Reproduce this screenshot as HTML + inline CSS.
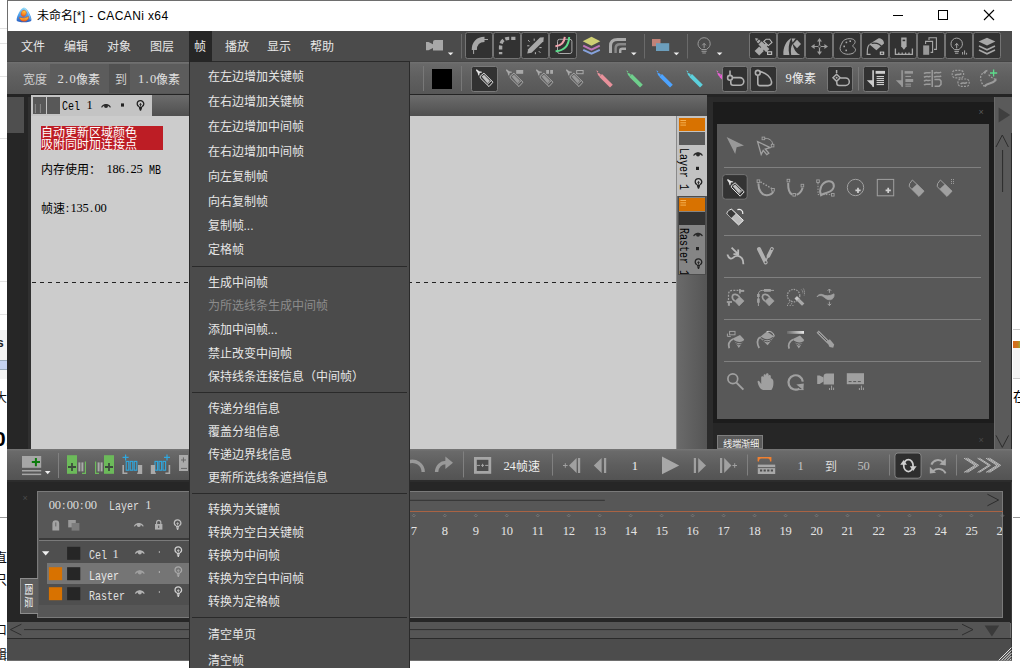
<!DOCTYPE html>
<html lang="zh-CN">
<head>
<meta charset="utf-8">
<title>CACANi</title>
<style>
*{box-sizing:border-box;margin:0;padding:0}
html,body{width:1020px;height:668px;overflow:hidden;background:#fff}
body{position:relative;font-family:"Liberation Sans",sans-serif;font-size:12px;color:#ddd}
.a{position:absolute}
.t{position:absolute;white-space:nowrap;line-height:14px;font-size:12px}
.d{display:inline-block;position:relative;top:-1px;width:6px;text-align:center;font-family:"Liberation Serif",serif;font-size:12.5px}
.w{display:inline-block;white-space:pre}
.m2{display:inline-block;font-family:"Liberation Mono",monospace;font-size:12.5px;transform:scaleX(.8);transform-origin:0 50%}
.m{font-family:"Liberation Mono",monospace;transform:scaleX(.8);transform-origin:0 50%}
svg{position:absolute;overflow:visible}
.btn{position:absolute;width:27.6px;height:27px;background:#323232;border:1px solid #747474;border-radius:2.5px}
.vsep{position:absolute;width:1px;background:#787878}
.mi{position:absolute;top:39px;font-size:12px;color:#e6e6e6;line-height:16px;white-space:nowrap}
.pi{position:absolute;left:207.5px;font-size:12px;color:#e6e6e6;line-height:14px;white-space:nowrap}
.dis{color:#8c8c8c}
.psep{position:absolute;left:192px;width:215px;height:1px;background:#2a2a2a}
</style>
</head>
<body>
<div class="a" style="left:0px;top:28px;width:7px;height:1px;background:#e2e2e2"></div>
<div class="a" style="left:0px;top:43px;width:7px;height:1px;background:#e2e2e2"></div>
<div class="a" style="left:0px;top:76px;width:7px;height:1px;background:#e2e2e2"></div>
<div class="a" style="left:0px;top:138px;width:7px;height:1px;background:#e2e2e2"></div>
<div class="a" style="left:0px;top:281px;width:7px;height:1px;background:#e2e2e2"></div>
<div class="a" style="left:0px;top:314px;width:7px;height:1px;background:#e2e2e2"></div>
<div class="a" style="left:0px;top:330px;width:8px;height:49px;background:#f3f3f3"></div>
<div class="a" style="left:0px;top:360px;width:7px;height:10px;background:#c4d2f0;border-top:1px solid #9ab;border-bottom:1px solid #9ab"></div>
<div class="t" style="left:-3px;top:336px;color:#222;font-size:12px;font-weight:bold">s</div>
<div class="t" style="left:-5px;top:391px;color:#111;font-size:12px">大</div>
<div class="t" style="left:-6px;top:428px;color:#000;font-size:21px;font-weight:bold;line-height:22px">0.</div>
<div class="a" style="left:0px;top:517px;width:8px;height:1px;background:#999"></div>
<div class="t" style="left:-6px;top:551px;color:#111;font-size:13px">直</div>
<div class="t" style="left:-6px;top:573px;color:#111;font-size:13px">只</div>
<div class="t" style="left:-6px;top:623px;color:#111;font-size:13px">口</div>
<div class="t" style="left:-6px;top:648px;color:#111;font-size:13px">辑</div>
<div class="a" style="left:1013px;top:329px;width:7px;height:1px;background:#ccc"></div>
<div class="a" style="left:1013px;top:341px;width:7px;height:7px;background:linear-gradient(to right,#d8661a,#c87a20 70%,#9a3)"></div>
<div class="a" style="left:1013px;top:348px;width:7px;height:31px;background:#f4f4f4;border-bottom:1px solid #ccc"></div>
<div class="t" style="left:1013px;top:390px;color:#000;font-size:13px">在</div>
<div class="a" style="left:1013px;top:517px;width:7px;height:1px;background:#999"></div>
<div class="a" style="left:7px;top:0px;width:1005.4px;height:660.5px;background:#6e6e6e"></div>
<div class="a" style="left:8px;top:1px;width:1004.3px;height:30.3px;background:#fff"></div>
<svg style="left:16px;top:7px" width="16" height="16" viewBox="0 0 16 16" ><defs><linearGradient id="tg" x1="0" y1="0" x2="0" y2="1"><stop offset="0" stop-color="#8fdcf8"/><stop offset=".55" stop-color="#4a9be8"/><stop offset="1" stop-color="#2a5fc0"/></linearGradient>
<linearGradient id="og" x1="0" y1="0" x2="0" y2="1"><stop offset="0" stop-color="#ffd838"/><stop offset="1" stop-color="#f0601a"/></linearGradient></defs>
<path d="M8,.4C11,.4 15.8,9.6 15.4,13.2C15,15.9 1,15.9 .6,13.2C.2,9.6 5,.4 8,.4Z" fill="url(#tg)"/>
<path d="M8,1.6C10.2,1.6 14.4,9.8 14.2,12.6" fill="none" stroke="#b8ecff" stroke-width=".8" opacity=".7"/>
<ellipse cx="7.7" cy="6.3" rx="2.5" ry="3.1" fill="url(#og)" stroke="#e0481a" stroke-width=".5" transform="rotate(20 7.7 6.3)"/>
<path d="M3.4,10.2Q8,12.2 12.8,9.6Q12.4,14.3 8,14.3Q4,14.3 3.4,10.2Z" fill="url(#og)" stroke="#e0481a" stroke-width=".5"/></svg>
<div class="t" style="left:37px;top:8.8px;color:#000;font-size:12px;line-height:14px">未命名<span style="letter-spacing:.38px">[*] - CACANi x64</span></div>
<svg style="left:880px;top:0px" width="140" height="31" viewBox="0 0 140 31" ><g stroke="#000" stroke-width="1" fill="none"><path d="M13,15.5H23"/><rect x="58.5" y="10.5" width="9" height="9"/><path d="M104,10L114,20M114,10L104,20" stroke-width="1.1"/></g></svg>
<div class="a" style="left:7.2px;top:31.3px;width:1005px;height:30px;background:#4b4b4b"></div>
<div class="a" style="left:7.2px;top:60.6px;width:1005px;height:1.4px;background:#444"></div>
<div class="a" style="left:189px;top:31.3px;width:22.5px;height:30px;background:#262626"></div>
<div class="mi" style="left:21px">文件</div>
<div class="mi" style="left:64px">编辑</div>
<div class="mi" style="left:107px">对象</div>
<div class="mi" style="left:150px">图层</div>
<div class="mi" style="left:193.5px">帧</div>
<div class="mi" style="left:224.5px">播放</div>
<div class="mi" style="left:267px">显示</div>
<div class="mi" style="left:310px">帮助</div>
<svg style="left:0px;top:0px" width="1020" height="64" viewBox="0 0 1020 64" ><path d="M435,40h8v10.4h-10v-8.4a2,2 0 0 1 2,-2z" fill="#a8a8a8"/><polygon points="426,42 428.5,42 433,44.2 433,48 428.5,50.2 426,50.2" fill="#a8a8a8"/><polygon points="447.8,52.4 453.4,52.4 450.6,55.2" fill="#eee"/><rect x="461" y="34" width="1" height="24.5" fill="#6a6a6a"/><polygon points="591.5,36.8 600.3,41.3 591.5,45.8 582.7,41.3" fill="#cfcf74"/><polyline points="583.2,45.6 591.5,49.6 599.8,45.6" fill="none" stroke="#c074b8" stroke-width="2"/><polyline points="583.2,49.8 591.5,53.6 599.8,49.8" fill="none" stroke="#86a2dc" stroke-width="2"/><path d="M610.5,53V46Q610.5,39.5 617.5,39.5H626" fill="none" stroke="#aaa" stroke-width="3"/><path d="M615.6,53V48.5Q615.6,44.3 620,44.3H626" fill="none" stroke="#888" stroke-width="2.4"/><path d="M620.2,53V50.6Q620.2,48.8 622.3,48.8H626" fill="none" stroke="#aaa" stroke-width="2.4"/><polygon points="631,52.4 636.6,52.4 633.8,55.2" fill="#eee"/><rect x="644" y="34" width="1" height="24.5" fill="#6a6a6a"/><rect x="652" y="39" width="8.5" height="7.2" fill="#c08278"/><rect x="656" y="43.2" width="13.2" height="7.8" fill="#6c9ebc"/><polygon points="673.6,52.4 679.2,52.4 676.4,55.2" fill="#eee"/><rect x="687" y="34" width="1" height="24.5" fill="#6a6a6a"/><g fill="none" stroke="#9a9a9a" stroke-width="1"><path d="M701.5,49.2C699,47.6 698,45.8 698,43.8A6.1,6.1 0 0 1 710.2,43.8C710.2,45.8 709.2,47.6 706.7,49.2"/><path d="M701.5,49.5H706.7M701.5,51.3H706.7M702.3,53H705.9"/><path d="M704.1,48V43.5M702.3,45.3L704.1,43.3L705.9,45.3"/></g><polygon points="716.8,52.4 722.4,52.4 719.6,55.2" fill="#eee"/></svg>
<div class="btn" style="left:465px;top:32px"></div>
<div class="btn" style="left:493px;top:32px"></div>
<div class="btn" style="left:521px;top:32px"></div>
<div class="btn" style="left:549px;top:32px"></div>
<div class="btn" style="left:749.2px;top:32px"></div>
<div class="btn" style="left:777.2px;top:32px"></div>
<div class="btn" style="left:805.2px;top:32px"></div>
<div class="btn" style="left:833.2px;top:32px"></div>
<div class="btn" style="left:861.2px;top:32px"></div>
<div class="btn" style="left:889.2px;top:32px"></div>
<div class="btn" style="left:917.2px;top:32px"></div>
<div class="btn" style="left:945.2px;top:32px"></div>
<div class="btn" style="left:973.2px;top:32px"></div>
<svg style="left:0px;top:0px" width="1020" height="64" viewBox="0 0 1020 64" ><path d="M474.3,50C474.3,43.5 478,39.4 484.5,39.4" fill="none" stroke="#a8a8a8" stroke-width="5.2"/><path d="M484,39.5H488M473.6,49.5V54" stroke="#a8a8a8" stroke-width="1" fill="none"/><path d="M500.6,54.2V47.5C500.6,41.5 503.5,38.4 509,38.4H516.4" fill="none" stroke="#a8a8a8" stroke-width="3.4" stroke-dasharray="2.2 2.4 4 2.2 4.2 2 4 2 4.2 2"/><path d="M543.8,37.2L540,37.6L528.2,49.2L527.2,53.6L531.6,52.8L543.4,41.2Z" fill="#a8a8a8"/><path d="M533,44.5L530.8,42.3" stroke="#333" stroke-width="0"/><g stroke="#bbb" stroke-width="1"><path d="M528,40.2L529.6,41.6M534.2,38.6V40.8M527.2,45.8H529.4M539.4,47.6H541.6M538.8,51.2L540.4,52.8M535.4,52.2V54.2"/></g><rect x="557.5" y="39.3" width="14.4" height="14.2" rx="2" fill="none" stroke="#aaa" stroke-width="1"/><path d="M555.4,46.2C561,45.6 564.4,42 564.8,36.8" fill="none" stroke="#f2a2ac" stroke-width="2"/><path d="M555.6,51.3C564,50.6 568.8,45.4 569.2,37" fill="none" stroke="#5edc8c" stroke-width="2"/><g fill="#a8a8a8"><polygon points="755.2,38 758.4,38.8 756,41.2"/><polygon points="756.6,41.8 759,39.4 760.6,41 758.2,43.4"/><polygon points="758.4,44.4 761.6,41.2 769.4,49 766.2,52.2"/><polygon points="765.4,43.2 767.8,45.6 762.4,51 760,48.6"/><polygon points="754.6,51 759.2,46.4 763.8,51 759.2,55.6"/></g><path d="M763.8,41.4L766.2,39.2H769.6L772,42.4L768.4,45.6Z" fill="#323232" stroke="#bbb" stroke-width="1.1"/><rect x="767" y="51.2" width="5.2" height="3.8" fill="#bbb"/><rect x="768.2" y="52.4" width="2.8" height="1.4" fill="#323232"/><path d="M783.4,55C783,47 786,41 791.4,38C788.6,43 788,49 789.4,55Z" fill="#a8a8a8"/><path d="M791.2,55C790.4,50 791,46.4 792.6,44C793.6,49 796,53 800.2,55Z" fill="#a8a8a8"/><path d="M797,39.8L801,44L797,48.2L793,44Z" fill="#a8a8a8"/><path d="M791.6,38.6H795.6L792.6,42.4Z" fill="#a8a8a8"/><g stroke="#9c9c9c" stroke-width="1.2" fill="none"><path d="M813,46.5H826M819.5,40V53"/></g><g fill="#9c9c9c"><polygon points="819.5,38 817,41.6 822,41.6"/><polygon points="819.5,55 817,51.4 822,51.4"/><polygon points="811,46.5 814.6,44 814.6,49"/><polygon points="828,46.5 824.4,44 824.4,49"/><polygon points="819.5,44.9 821.1,46.5 819.5,48.1 817.9,46.5" fill="#323232" stroke="#9c9c9c" stroke-width=".6"/></g><path d="M842,43C843,39.6 848,37.8 852.4,39C856.2,40 855.4,43.4 853.6,44.6C852,45.8 853.2,47.2 854.6,48C856.4,49 855.6,52.4 852,53.6C847,55.2 842.4,53.8 840.6,50.6C839.2,48 840.8,45.4 842,43Z" fill="none" stroke="#a8a8a8" stroke-width="1"/><g fill="#a8a8a8"><rect x="845.6" y="41.6" width="1.6" height="1.6"/><rect x="849.4" y="40.4" width="1.6" height="1.6"/><rect x="843.4" y="45.6" width="1.6" height="1.6"/><rect x="845.4" y="49.6" width="1.6" height="1.6"/></g><path d="M869.2,44.2L878.6,38.2C881.6,38 884,40.4 884,43.4L876.4,50.2Z" fill="#a8a8a8"/><path d="M870,44L879.2,38.6" stroke="#333" stroke-width="0"/><path d="M871.6,43.4C876,42.4 880.4,44.4 882.6,47.6" fill="none" stroke="#333" stroke-width="1.2"/><path d="M869.4,44.6C866.6,47 867.6,51 867.2,54.4H870.6" fill="none" stroke="#a8a8a8" stroke-width="1.2"/><rect x="879.8" y="51.6" width="4.4" height="3.2" fill="#ccc"/><rect x="880.8" y="52.6" width="2.4" height="1.2" fill="#333"/><path d="M901.2,37.4H906.6V46.2L903.9,49.8L901.2,46.2Z" fill="#a8a8a8"/><rect x="902.6" y="39.6" width="2.6" height="1.6" fill="#333"/><path d="M895.4,48.6V54.4H912.4V48.6M898.8,52.4V54M902.2,52.4V54M905.6,52.4V54M909,52.4V54" fill="none" stroke="#a8a8a8" stroke-width="1.3"/><rect x="923.2" y="45.4" width="6" height="9.4" fill="#999"/><path d="M925.6,44V41.4H932.6V52.4H930.6M929,40V37.8H936.4V49.4H934" fill="none" stroke="#a8a8a8" stroke-width="1.1"/><g fill="none" stroke="#a8a8a8" stroke-width="1"><path d="M954.4,49.4C952,47.8 951,46 951,43.8A5.7,5.7 0 0 1 962.4,43.8C962.4,46 961.4,47.8 959,49.4"/><path d="M954.4,49.6H959M954.4,51.4H959M955,53.2H958.4"/><path d="M956.7,48.4V43.6M955,45.4L956.7,43.4L958.4,45.4"/><path d="M962.6,52V54.6M964.6,50.4V54.6M966.6,52.8V54.6"/></g><polygon points="987,37.8 995.4,41.6 987,45.4 978.6,41.6" fill="#a8a8a8"/><polyline points="979,46 987,49.8 995,46" fill="none" stroke="#a8a8a8" stroke-width="1.5"/><polyline points="979,50 987,53.8 995,50" fill="none" stroke="#a8a8a8" stroke-width="1.5"/></svg>
<div class="a" style="left:7.2px;top:62px;width:1005px;height:31.5px;background:linear-gradient(#727272,#696969 6%,#606060 45%,#575757)"></div>
<div class="a" style="left:7.2px;top:93.5px;width:1005px;height:3px;background:#242424"></div>
<div class="a" style="left:50px;top:63.5px;width:59px;height:29.5px;background:#5c5c5c"></div>
<div class="a" style="left:109.3px;top:63.5px;width:20.3px;height:29.5px;background:#515151"></div>
<div class="a" style="left:130px;top:63.5px;width:60px;height:29.5px;background:#5c5c5c"></div>
<div class="t" style="left:22.5px;top:73px;color:#cfcfcf">宽度</div>
<div class="t" style="left:57.5px;top:73px;color:#e0e0e0;"><span class="d">2</span><span class="d">.</span><span class="d">0</span></div>
<div class="t" style="left:75.5px;top:73px;color:#e0e0e0">像素</div>
<div class="t" style="left:114.5px;top:73px;color:#d0d0d0">到</div>
<div class="t" style="left:138px;top:73px;color:#e0e0e0;"><span class="d">1</span><span class="d">.</span><span class="d">0</span></div>
<div class="t" style="left:156px;top:73px;color:#e0e0e0">像素</div>
<div class="vsep" style="left:423px;top:66px;height:24.5px"></div>
<div class="a" style="left:432px;top:69px;width:20.2px;height:20px;background:#000"></div>
<div class="vsep" style="left:461px;top:66px;height:24.5px"></div>
<div class="btn" style="left:470.5px;top:65.6px;height:26px;width:27px;border-color:#7a7a7a;border-radius:2.5px"></div>
<svg style="left:0px;top:0px" width="1020" height="98" viewBox="0 0 1020 98" ><g transform="translate(476,69.6)"><path d="M0,0L1,0L3.2,1.6L6,2.2V3L3.7,3.3L3.2,6H2.4L1.6,3.2L0,1Z" fill="#e4e4e4"/><path d="M4.2,6.6L7.9,3.6L17,12.6L13,17L4.2,8.2Z" fill="none" stroke="#e4e4e4" stroke-width="1" stroke-linejoin="round"/><path d="M5.6,7L8,5.2L13.9,11.2L11.3,13.7Z" fill="#e4e4e4" opacity=".8"/><path d="M11.4,14.6L15.2,11" stroke="#e4e4e4" stroke-width="1"/></g><g transform="translate(506,69.6)"><path d="M0,0L1,0L3.2,1.6L6,2.2V3L3.7,3.3L3.2,6H2.4L1.6,3.2L0,1Z" fill="#a8a8a8"/><path d="M4.2,6.6L7.9,3.6L17,12.6L13,17L4.2,8.2Z" fill="none" stroke="#a8a8a8" stroke-width="1" stroke-linejoin="round"/><path d="M5.6,7L8,5.2L13.9,11.2L11.3,13.7Z" fill="#a8a8a8" opacity=".8"/><path d="M11.4,14.6L15.2,11" stroke="#a8a8a8" stroke-width="1"/></g><rect x="516.2" y="70" width="7" height="3.8" fill="#a8a8a8"/><g transform="translate(536,69.6)"><path d="M0,0L1,0L3.2,1.6L6,2.2V3L3.7,3.3L3.2,6H2.4L1.6,3.2L0,1Z" fill="#a8a8a8"/><path d="M4.2,6.6L7.9,3.6L17,12.6L13,17L4.2,8.2Z" fill="none" stroke="#a8a8a8" stroke-width="1" stroke-linejoin="round"/><path d="M5.6,7L8,5.2L13.9,11.2L11.3,13.7Z" fill="#a8a8a8" opacity=".8"/><path d="M11.4,14.6L15.2,11" stroke="#a8a8a8" stroke-width="1"/></g><rect x="546.2" y="70" width="2.8" height="3.8" fill="#a8a8a8"/><rect x="550.2" y="70" width="2.8" height="3.8" fill="#a8a8a8"/><g transform="translate(566,69.6)"><path d="M0,0L1,0L3.2,1.6L6,2.2V3L3.7,3.3L3.2,6H2.4L1.6,3.2L0,1Z" fill="#a8a8a8"/><path d="M4.2,6.6L7.9,3.6L17,12.6L13,17L4.2,8.2Z" fill="none" stroke="#a8a8a8" stroke-width="1" stroke-linejoin="round"/><path d="M5.6,7L8,5.2L13.9,11.2L11.3,13.7Z" fill="#a8a8a8" opacity=".8"/><path d="M11.4,14.6L15.2,11" stroke="#a8a8a8" stroke-width="1"/></g><rect x="576.7" y="70.5" width="6.4" height="3.2" fill="none" stroke="#a8a8a8" stroke-width="1"/><g transform="translate(596,70)"><path d="M0.2,0.2L2.4,1.6L1.4,2.6Z" fill="#e8919b"/><path d="M1.2,2.4L3.6,3.4L5,4.8L3.4,6.4L2,5Z" fill="#e8919b"/><path d="M3.2,6.8L6,4L16.8,14.8L14,17.4Z" fill="#e8919b"/></g><g transform="translate(626,70)"><path d="M0.2,0.2L2.4,1.6L1.4,2.6Z" fill="#6fcf8c"/><path d="M1.2,2.4L3.6,3.4L5,4.8L3.4,6.4L2,5Z" fill="#6fcf8c"/><path d="M3.2,6.8L6,4L16.8,14.8L14,17.4Z" fill="#6fcf8c"/></g><g transform="translate(656,70)"><path d="M0.2,0.2L2.4,1.6L1.4,2.6Z" fill="#4da3ff"/><path d="M1.2,2.4L3.6,3.4L5,4.8L3.4,6.4L2,5Z" fill="#4da3ff"/><path d="M3.2,6.8L6,4L16.8,14.8L14,17.4Z" fill="#4da3ff"/></g><g transform="translate(686,70)"><path d="M0.2,0.2L2.4,1.6L1.4,2.6Z" fill="#5cd0dc"/><path d="M1.2,2.4L3.6,3.4L5,4.8L3.4,6.4L2,5Z" fill="#5cd0dc"/><path d="M3.2,6.8L6,4L16.8,14.8L14,17.4Z" fill="#5cd0dc"/></g><g transform="translate(716,70)"><path d="M0.2,0.2L2.4,1.6L1.4,2.6Z" fill="#e65fd2"/><path d="M1.2,2.4L3.6,3.4L5,4.8L3.4,6.4L2,5Z" fill="#e65fd2"/><path d="M3.2,6.8L6,4L16.8,14.8L14,17.4Z" fill="#e65fd2"/></g></svg>
<div class="btn" style="left:721.7px;top:65.8px;height:25.8px;width:26.6px;border-color:#787878;border-radius:2.5px"></div>
<div class="btn" style="left:750px;top:65.8px;height:25.8px;width:26.6px;border-color:#787878;border-radius:2.5px"></div>
<div class="btn" style="left:826.8px;top:65.8px;height:25.8px;width:26.6px;border-color:#787878;border-radius:2.5px"></div>
<div class="btn" style="left:862.6px;top:65.8px;height:25.8px;width:26.6px;border-color:#787878;border-radius:2.5px"></div>
<div class="t" style="left:785.5px;top:72px;color:#eee"><span class="d">9</span>像素</div>
<svg style="left:0px;top:0px" width="1020" height="98" viewBox="0 0 1020 98" ><g fill="none" stroke="#b0b0b0" stroke-width="1.6"><path d="M730,70.4V75"/><circle cx="730" cy="77.8" r="2.4" fill="#333"/><path d="M732.6,77.6H740A3.6,3.6 0 0 1 740,85.2H733A2.2,2.2 0 0 1 730.8,83V80.6"/></g><g fill="none" stroke="#b0b0b0" stroke-width="1.6"><circle cx="757.8" cy="72.8" r="2.4"/><path d="M760,71.6C766,72.6 771.4,77.6 771.6,82C771.6,84.4 770,85.6 768,85.6H759.8A2,2 0 0 1 757.8,83.6V75.4"/></g><g fill="none" stroke="#b0b0b0" stroke-width="1.5"><path d="M836.6,70V73"/><path d="M836.6,74.2L840.2,77.8L836.6,81.4L833,77.8Z"/><circle cx="836.6" cy="77.8" r="1" fill="#b0b0b0" stroke="none"/><path d="M840.4,78H845.6A3.4,3.4 0 0 1 845.6,85.4H839A2.2,2.2 0 0 1 836.8,83.2V81.8"/></g><rect x="858" y="67" width="1" height="23.5" fill="#787878"/><path d="M873.1,70.2V86.8" stroke="#cdcdcd" stroke-width="1.6"/><path d="M866.8,80.2H873.8V87.2Z" fill="#cdcdcd"/><rect x="875.6" y="70.9" width="9.4" height="2.9" fill="#cdcdcd"/><rect x="876.6" y="76" width="7.4" height="1.1" fill="#cdcdcd"/><rect x="876.6" y="78" width="7.4" height="1.1" fill="#cdcdcd"/><rect x="876.6" y="80" width="7.4" height="1.1" fill="#cdcdcd"/><rect x="876.6" y="82" width="7.4" height="1.1" fill="#cdcdcd"/><rect x="876.6" y="84" width="7.4" height="1.1" fill="#cdcdcd"/><path d="M902.1,70.2V86.8" stroke="#989898" stroke-width="1.6"/><path d="M895.8,80.2H902.8V87.2Z" fill="#989898"/><rect x="904.6" y="71.1" width="8.4" height="2.6" fill="#989898"/><rect x="905.4" y="75.9" width="5.6" height="1.1" fill="#989898"/><rect x="905.4" y="79" width="7.8" height="3" fill="#989898"/><rect x="905.4" y="83.6" width="5.6" height="1.1" fill="#989898"/><rect x="905.4" y="85.6" width="5.6" height="1.1" fill="#989898"/><g fill="none" stroke="#9c9c9c" stroke-width="1.5"><path d="M932.2,70V87"/><path d="M924,73.6C926,71.6 928.6,73.8 930.6,72.4M924,77.4C926,75.4 928.6,77.6 930.6,76.2M924,81.2C926,79.2 928.6,81.4 930.6,80M924,85C926,83 928.6,85.2 930.6,83.8"/><path d="M934,73.4C936,71.4 938.8,73.8 941.2,72M934,77.2C936,75.2 938.8,77.6 941.2,75.8M934.4,79.4H939.6L941,81V84.4L939.2,86.2H934.6"/></g><g fill="none" stroke="#9c9c9c" stroke-width="1.2" stroke-dasharray="2 1.2"><rect x="952.2" y="70.4" width="11.4" height="7.4" rx="3"/><rect x="958" y="79" width="11.2" height="7.4" rx="3"/></g><path d="M955,75.4C957,73 959.4,76 961.4,73.6M960.6,84C962.6,81.6 965,84.6 967,82.2" fill="none" stroke="#9c9c9c" stroke-width="1.5"/><g fill="none" stroke="#9c9c9c" stroke-width="1.3" stroke-dasharray="2 1.3"><path d="M986,72.6C982,72.6 980.4,75 980.6,78C980.8,81.6 982,84 984.4,86.4"/><path d="M988.6,74.6C990.6,76.6 992,78 994.6,78.8"/></g><path d="M983.6,73.2C985,71.2 986.6,70.6 987.4,70.6" stroke="#9c9c9c" stroke-width="1.6" fill="none"/><path d="M984.6,86.6C986.6,82.6 992,84.6 995.4,80.4V78.6" fill="none" stroke="#9c9c9c" stroke-width="2.2"/><path d="M993.6,69.4V76.4M990,73H997.2" stroke="#5edc8c" stroke-width="1.3"/></svg>
<div class="a" style="left:7.2px;top:96.5px;width:1005px;height:352px;background:#262626"></div>
<div class="a" style="left:7.2px;top:97px;width:16.8px;height:36px;background:#4f4f4f"></div>
<div class="a" style="left:28px;top:96.5px;width:3px;height:352px;background:#303030"></div>
<div class="a" style="left:30.9px;top:95.2px;width:676.5px;height:21.2px;background:linear-gradient(#6c6c6c,#4f4f4f)"></div>
<div class="a" style="left:30.9px;top:95.2px;width:121.1px;height:21px;background:#c4c4c4"></div>
<div class="a" style="left:33.2px;top:97.2px;width:12.8px;height:16.6px;background:#585858"></div>
<div class="a" style="left:47.1px;top:97.2px;width:12.8px;height:16.6px;background:#585858"></div>
<svg style="left:33px;top:97px" width="14" height="17" viewBox="0 0 14 17" ><path d="M2.4,7V16M7.4,7V16" stroke="#8a8a8a" stroke-width="1"/></svg>
<div class="t" style="left:62.4px;top:98.8px;color:#000;"><span class="w" style="width:24px"><span class="m2">Cel </span></span><span class="d">1</span></div>
<svg style="left:0px;top:90px" width="200" height="30" viewBox="0 0 200 30" ><g transform="translate(101,12.6)"><path d="M0,4.6C2,0.2 8,0.2 10,4.6L8.8,4.8C7,2.4 3,2.4 1.2,4.8Z" fill="#2a2a2a"/><circle cx="5" cy="3.4" r="2" fill="#2a2a2a"/></g><rect x="121" y="13.4" width="3" height="3.2" fill="#222"/><g transform="translate(136.6,10.2)" fill="none" stroke="#222" stroke-width="1.3"><path d="M2.3,6.4C1,5.5 .6,4.7 .6,3.8A3.3,3.3 0 0 1 7.2,3.8C7.2,4.7 6.8,5.5 5.5,6.4"/><path d="M2.3,7H5.5M2.5,8.5H5.3M3.2,9.8H4.6" stroke-width="1.4"/><path d="M3.9,6V3.6M2.9,4.4L3.9,3.2L4.9,4.4" stroke-width=".9"/></g></svg>
<div class="a" style="left:30.9px;top:116px;width:645.4px;height:332.6px;background:#cccccc"></div>
<div class="a" style="left:41px;top:126px;width:122.2px;height:24px;background:#bd1d25"></div>
<div class="t" style="left:40.6px;top:127.2px;color:#fff;line-height:13px">自动更新区域颜色</div>
<div class="t" style="left:40.6px;top:139.2px;color:#fff;line-height:13px">吸附同时加连接点</div>
<div class="t" style="left:40.6px;top:163px;color:#000">内存使用：</div>
<div class="t" style="left:106.6px;top:163px;color:#000;"><span class="d">1</span><span class="d">8</span><span class="d">6</span><span class="d">.</span><span class="d">2</span><span class="d">5</span><span class="w" style="width:18px"><span class="m2"> MB</span></span></div>
<div class="t" style="left:40.6px;top:202px;color:#000">帧速</div>
<div class="t" style="left:64.6px;top:202px;color:#000;"><span class="d">:</span><span class="d">1</span><span class="d">3</span><span class="d">5</span><span class="d">.</span><span class="d">0</span><span class="d">0</span></div>
<svg style="left:31px;top:281px" width="646" height="3" viewBox="0 0 646 3" ><path d="M1,1.5H645.5" stroke="#222" stroke-width="1.1" stroke-dasharray="4 4"/></svg>
<div class="a" style="left:676.4px;top:116.3px;width:31px;height:332.3px;background:linear-gradient(to right,#6b6b6b,#555)"></div>
<div class="a" style="left:676.2px;top:116.3px;width:1px;height:332.3px;background:#8a8a8a"></div>
<div class="a" style="left:677px;top:116.3px;width:30.2px;height:79.4px;background:#c2c2c2"></div>
<div class="a" style="left:679px;top:118.2px;width:26px;height:12.6px;background:#d87200"></div>
<svg style="left:679px;top:118px" width="10" height="12" viewBox="0 0 10 12" ><path d="M1.4,2.5H7M1.4,4.8H7M1.4,7.1H7" stroke="#f5b050" stroke-width="1"/></svg>
<div class="a" style="left:679px;top:132.4px;width:26px;height:12.2px;background:#5a5a5a"></div>
<div class="t m" style="left:690.4px;top:147.6px;color:#000;font-size:12.5px;transform-origin:0 0;transform:rotate(90deg) scaleX(.8)">Layer 1</div>
<svg style="left:0px;top:0px" width="1020" height="300" viewBox="0 0 1020 300" ><g transform="translate(693,151)"><path d="M0,4.6C2,0.2 8,0.2 10,4.6L8.8,4.8C7,2.4 3,2.4 1.2,4.8Z" fill="#2a2a2a"/><circle cx="5" cy="3.4" r="2" fill="#2a2a2a"/></g><rect x="696" y="166.8" width="3" height="3.2" fill="#222"/><g transform="translate(694.6,178.2)" fill="none" stroke="#222" stroke-width="1.3"><path d="M2.3,6.4C1,5.5 .6,4.7 .6,3.8A3.3,3.3 0 0 1 7.2,3.8C7.2,4.7 6.8,5.5 5.5,6.4"/><path d="M2.3,7H5.5M2.5,8.5H5.3M3.2,9.8H4.6" stroke-width="1.4"/><path d="M3.9,6V3.6M2.9,4.4L3.9,3.2L4.9,4.4" stroke-width=".9"/></g></svg>
<div class="a" style="left:677.6px;top:196px;width:28.4px;height:78.8px;background:#858585;border:1px solid #5c5c5c;overflow:hidden"><div class="t m" style="left:11.8px;top:30.6px;color:#000;font-size:12.5px;transform-origin:0 0;transform:rotate(90deg) scaleX(.8)">Raster 1</div></div>
<div class="a" style="left:679px;top:198.2px;width:26px;height:13.2px;background:#d87200"></div>
<svg style="left:679px;top:198px" width="10" height="12" viewBox="0 0 10 12" ><path d="M1.4,2.5H7M1.4,4.8H7M1.4,7.1H7" stroke="#f5b050" stroke-width="1"/></svg>
<div class="a" style="left:679px;top:212px;width:26px;height:13.4px;background:#333"></div>
<svg style="left:0px;top:0px" width="1020" height="300" viewBox="0 0 1020 300" ><g transform="translate(693,231.4)"><path d="M0,4.6C2,0.2 8,0.2 10,4.6L8.8,4.8C7,2.4 3,2.4 1.2,4.8Z" fill="#2a2a2a"/><circle cx="5" cy="3.4" r="2" fill="#2a2a2a"/></g><rect x="696" y="247" width="3" height="3.2" fill="#222"/><g transform="translate(694.6,258.4)" fill="none" stroke="#222" stroke-width="1.3"><path d="M2.3,6.4C1,5.5 .6,4.7 .6,3.8A3.3,3.3 0 0 1 7.2,3.8C7.2,4.7 6.8,5.5 5.5,6.4"/><path d="M2.3,7H5.5M2.5,8.5H5.3M3.2,9.8H4.6" stroke-width="1.4"/><path d="M3.9,6V3.6M2.9,4.4L3.9,3.2L4.9,4.4" stroke-width=".9"/></g></svg>
<div class="a" style="left:677.5px;top:196px;width:28.6px;height:79px;border:1px solid #4c4c4c"></div>
<div class="a" style="left:707.4px;top:96.5px;width:5.4px;height:352px;background:#2b2b2b"></div>
<div class="a" style="left:712.8px;top:96.5px;width:281px;height:5.6px;background:#2a2a2a"></div>
<div class="a" style="left:712.8px;top:102px;width:281px;height:320.6px;background:#1c1c1c"></div>
<div class="a" style="left:717.1px;top:123.8px;width:272px;height:295.4px;background:#585858"></div>
<div class="t" style="left:978.6px;top:105px;color:#5a5a5a;font-size:9px">×</div>
<div class="t" style="left:978.6px;top:432.6px;color:#4a4a4a;font-size:9px">×</div>
<div class="a" style="left:724px;top:166.9px;width:257px;height:1px;background:#808080"></div>
<div class="a" style="left:724px;top:234.7px;width:257px;height:1px;background:#808080"></div>
<div class="a" style="left:724px;top:276.8px;width:257px;height:1px;background:#808080"></div>
<div class="a" style="left:724px;top:318.9px;width:257px;height:1px;background:#808080"></div>
<div class="a" style="left:724px;top:360.7px;width:257px;height:1px;background:#808080"></div>
<div class="a" style="left:993.8px;top:96.8px;width:18.4px;height:351.8px;background:#5a5a5a;border-left:1px solid #6a6a6a"></div>
<div class="a" style="left:1010.8px;top:133px;width:1.5px;height:315.6px;background:#2c2c2c"></div>
<svg style="left:990px;top:96px" width="30" height="360" viewBox="0 0 30 360" ><polygon points="8.6,11.6 20.2,19 8.6,26.4" fill="#3f3f3f"/><path d="M6,51L12.3,39L18.4,51" fill="none" stroke="#2c2c2c" stroke-width="1"/><path d="M12.6,54V96" stroke="#2c2c2c" stroke-width="1"/><path d="M6,339.4L12.3,351.4L18.6,339.4" fill="none" stroke="#2c2c2c" stroke-width="1"/></svg>
<div class="a" style="left:717.2px;top:435.3px;width:45.6px;height:14px;background:#5a5a5a;border:1px solid #7e7e7e"></div>
<div class="t" style="left:722.6px;top:439.4px;font-size:9.3px;color:#f0f0f0;line-height:11px;height:10px;overflow:hidden">线端渐细</div>
<svg style="left:0px;top:0px" width="1020" height="450" viewBox="0 0 1020 450" ><polygon points="726.6,137 744,145.6 736.6,147.2 735.2,154" fill="#989898"/><path d="M757.6,141.6L770.2,147.6L765.2,149L768.8,153.2L766.8,154.6L763.2,150.4L761.2,154.4Z" fill="none" stroke="#a0a0a0" stroke-width="1.3"/><path d="M764.6,138.4C769,138 772.4,140.6 772.6,144" fill="none" stroke="#a0a0a0" stroke-width="1"/><rect x="762.1" y="137.1" width="2.6" height="2.6" fill="#585858" stroke="#a0a0a0" stroke-width=".9"/><rect x="771.3" y="144.3" width="2.6" height="2.6" fill="#585858" stroke="#a0a0a0" stroke-width=".9"/><rect x="722.6" y="174.6" width="24.6" height="24.6" rx="3" fill="#333" stroke="#757575" stroke-width="1"/><g transform="translate(727.2,179.2)"><path d="M0,0L1,0L3.2,1.6L6,2.2V3L3.7,3.3L3.2,6H2.4L1.6,3.2L0,1Z" fill="#e2e2e2"/><path d="M4.2,6.6L7.9,3.6L17,12.6L13,17L4.2,8.2Z" fill="none" stroke="#e2e2e2" stroke-width="1" stroke-linejoin="round"/><path d="M5.6,7L8,5.2L13.9,11.2L11.3,13.7Z" fill="#e2e2e2" opacity=".8"/><path d="M11.4,14.6L15.2,11" stroke="#e2e2e2" stroke-width="1"/></g><path d="M758.6,183.4C758,190 762,195.6 767,195.2C770,195 772.6,193 773.2,191.6" fill="none" stroke="#a0a0a0" stroke-width="2"/><path d="M760.4,181.8L771.8,188.6" stroke="#a0a0a0" stroke-width="1.4" stroke-dasharray="1.6 1.4"/><rect x="757.1" y="179.9" width="2.6" height="2.6" fill="#585858" stroke="#a0a0a0" stroke-width=".9"/><rect x="771.7" y="188.5" width="2.6" height="2.6" fill="#585858" stroke="#a0a0a0" stroke-width=".9"/><path d="M788.2,183C788,189.6 789.6,193.4 792.2,194.6M796.6,194.8C800,193.6 801.8,190.6 802.6,187.8" fill="none" stroke="#a0a0a0" stroke-width="2"/><rect x="787.1" y="179.3" width="2.6" height="2.6" fill="#585858" stroke="#a0a0a0" stroke-width=".9"/><rect x="801.1" y="184.3" width="2.6" height="2.6" fill="#585858" stroke="#a0a0a0" stroke-width=".9"/><rect x="792.9" y="193.5" width="2.6" height="2.6" fill="#585858" stroke="#a0a0a0" stroke-width=".9"/><path d="M821,195.2C818.6,189.6 821.6,182 828.4,181.2C833.4,180.8 835.4,185.6 832.4,189.6C829.4,193.4 825,192.4 821,195.2Z" fill="none" stroke="#a0a0a0" stroke-width="2"/><path d="M818,183V194.6H831" fill="none" stroke="#a0a0a0" stroke-width="1" stroke-dasharray="1.4 1.4"/><rect x="816.7" y="179.9" width="2.6" height="2.6" fill="#585858" stroke="#a0a0a0" stroke-width=".9"/><rect x="831.5" y="193.5" width="2.6" height="2.6" fill="#585858" stroke="#a0a0a0" stroke-width=".9"/><circle cx="855.5" cy="187.5" r="8.2" fill="none" stroke="#a0a0a0" stroke-width="1"/><path d="M858,187.8V193M855.4,190.4H860.6" stroke="#d0d0d0" stroke-width="1.7"/><rect x="877.3" y="179.4" width="16.4" height="16.4" fill="none" stroke="#a0a0a0" stroke-width="1"/><path d="M888.2,187.8V193M885.6,190.4H890.8" stroke="#d0d0d0" stroke-width="1.7"/><g transform="translate(909,179.6)"><path d="M3.4,.4L15,11.6L10,16.8L.2,7Q-.6,4.4 3.4,.4Z" fill="none" stroke="#a0a0a0" stroke-width="1"/><path d="M8,4.4L15,11.6L10,16.8L2.6,9.4Z" fill="#a0a0a0"/></g><g transform="translate(937,179.6)"><path d="M3.4,.4L15,11.6L10,16.8L.2,7Q-.6,4.4 3.4,.4Z" fill="none" stroke="#a0a0a0" stroke-width="1"/><path d="M8,4.4L15,11.6L10,16.8L2.6,9.4Z" fill="#a0a0a0"/></g><path d="M951,179.6H954.6M951,181.6H954.6M951,183.4H954.6" stroke="#a0a0a0" stroke-width="1" stroke-dasharray="1 1"/><path d="M731.6,209.2L743.4,220.4L738.6,225L726.8,213.6C727.4,211.4 729.4,209.6 731.6,209.2Z" fill="#bdbdbd" stroke="#eee" stroke-width="1"/><path d="M731.4,209.8L735.6,213.8L731.2,218L727.2,213.8C727.6,211.6 729.4,210 731.4,209.8Z" fill="#3a3a3a"/><path d="M737.4,209.6C740.6,208.6 743.2,210.6 742.8,214" fill="none" stroke="#eee" stroke-width="1.2"/><path d="M727.4,254.6C728.6,258.8 731.4,259.6 733.6,257.4C736.4,254.6 740,256 742,258.4C743.2,260 743.4,262 743.4,264.2" fill="none" stroke="#b8b8b8" stroke-width="1.8"/><path d="M731.6,247.6L737.6,253.6M738.2,249.4V254.2H733.4" fill="none" stroke="#b8b8b8" stroke-width="1.8"/><path d="M759,249L765.6,262.4" stroke="#b0b0b0" stroke-width="4" stroke-linecap="round"/><path d="M772,248.8L768.4,256" stroke="#b0b0b0" stroke-width="3.6" stroke-linecap="round"/><path d="M768,256.4L765.8,261" stroke="#b0b0b0" stroke-width="1.4"/><circle cx="765.6" cy="262.2" r="1" fill="#585858"/><circle cx="771.8" cy="249.2" r=".9" fill="#585858"/><polygon points="734.8,301.3 739.7,296.8 744.1,300.9 739.1,305.9" fill="#a0a0a0" stroke="#a0a0a0" stroke-width=".6" stroke-linejoin="round"/><path d="M734.8,301C731,298.4 731.8,294 735.4,294.4C737.4,294.6 738.6,295.8 739.6,297" fill="none" stroke="#a0a0a0" stroke-width="1.7"/><path d="M728.5,300V294.6C728.5,291.6 730,290.3 732.6,290.3H738.4" fill="none" stroke="#a0a0a0" stroke-width="1.2" stroke-dasharray="2 1.2"/><path d="M739.9,289V293.6" stroke="#a0a0a0" stroke-width="1.7" fill="none"/><path d="M739.9,290.9H744.2" stroke="#a0a0a0" stroke-width="2"/><path d="M726.8,302H732" stroke="#a0a0a0" stroke-width="1.8"/><path d="M728.9,302V305.8" stroke="#a0a0a0" stroke-width="2"/><polygon points="764.9,301.3 769.8,296.8 774.2,300.9 769.2,305.9" fill="#a0a0a0" stroke="#a0a0a0" stroke-width=".6" stroke-linejoin="round"/><path d="M764.9,301C761.1,298.4 761.9,294 765.5,294.4C767.5,294.6 768.7,295.8 769.7,297" fill="none" stroke="#a0a0a0" stroke-width="1.7"/><path d="M758.4,306V294.6C758.4,291.6 760,290.4 762.6,290.4H774" fill="none" stroke="#a0a0a0" stroke-width="1"/><path d="M764,290.4H770.8" stroke="#a0a0a0" stroke-width="2.8"/><path d="M758.4,294V297M758.4,298.6V302.8" stroke="#a0a0a0" stroke-width="2.6"/><circle cx="793.6" cy="295.6" r="6.2" fill="none" stroke="#a0a0a0" stroke-width="1.2" stroke-dasharray="1.5 1.1"/><polygon points="794.6,298.6 797,296.2 804.4,303.4 802,305.8" fill="#a8a8a8"/><polygon points="794.6,298.6 797,296.2 799,298.2 796.6,300.6" fill="#c8c8c8"/><path d="M787.4,306C788,303 789.6,301.4 792,301M790,306C790.4,304.4 791.4,303.4 793,303.2M792.6,306C792.8,305.2 793.4,304.8 794.2,304.6M801.4,289.6C802.6,290.6 803,292 802.8,293.6M803.4,288.6C804.6,290.4 804.8,293 804.2,295.4" stroke="#a0a0a0" stroke-width="1" fill="none" stroke-dasharray="1.2 .9"/><path d="M817,296.8C818.4,294.4 820.6,293.8 822.6,294.6C825,295.6 826.6,296 829,295.6C831.4,295.2 832.8,294.6 834,293.8C834.6,297.6 832.4,299.8 829.4,299.8C826.4,299.8 825,297.4 822.4,296C820.6,295.2 818.8,295.4 817,296.8Z" fill="#a0a0a0" stroke="#a0a0a0" stroke-width=".8"/><path d="M829.4,289V292.8M827.6,290.8L829.4,289L831.2,290.8M829.4,301.6V305.6M827.6,303.8L829.4,305.6L831.2,303.8" fill="none" stroke="#a0a0a0" stroke-width="1"/><polygon points="732.8,338.6 740,335 744.2,339.6 738.8,348" fill="#a0a0a0"/><path d="M733.8,340.8Q738.8,344.2 743.4,341.6" fill="none" stroke="#585858" stroke-width="1.2"/><path d="M735.4,343.2Q738.8,346.2 742,343.8" fill="none" stroke="#585858" stroke-width="1"/><path d="M733,339C728.2,341.6 728,344.8 729.2,348.2" fill="none" stroke="#a0a0a0" stroke-width="1.7"/><rect x="729.6" y="331.4" width="5.4" height="3.4" fill="none" stroke="#a0a0a0" stroke-width="1"/><path d="M727.4,333.6V336.4H730.8" fill="none" stroke="#a0a0a0" stroke-width="1"/><polygon points="759.4,337.4 767,331.4 774.2,336.6 767.6,345.2" fill="#a0a0a0"/><path d="M761,337.6Q767.4,342 773,337.4" fill="none" stroke="#585858" stroke-width="1.2"/><path d="M762.6,340Q767.4,343.6 771.4,340" fill="none" stroke="#585858" stroke-width="1"/><path d="M766.6,331.6C770.6,330.6 774,333 774.2,336.4" fill="none" stroke="#c8c8c8" stroke-width="1"/><path d="M759.8,337.2C756.8,340 757,344 759.2,348" fill="none" stroke="#a0a0a0" stroke-width="1.7"/><polygon points="792.8,339 800,335.4 804.2,340 798.8,348.4" fill="#a0a0a0"/><path d="M793.8,341.2Q798.8,344.6 803.4,342" fill="none" stroke="#585858" stroke-width="1.2"/><path d="M795.4,343.6Q798.8,346.6 802,344.2" fill="none" stroke="#585858" stroke-width="1"/><path d="M793,339.4C788.2,342 788,345.2 789.2,348.6" fill="none" stroke="#a0a0a0" stroke-width="1.7"/><defs><linearGradient id="gr1" x1="0" x2="1"><stop offset="0" stop-color="#6a6a6a"/><stop offset="1" stop-color="#e8e8e8"/></linearGradient></defs><rect x="787" y="331" width="17" height="2.8" fill="url(#gr1)"/><path d="M817.6,331.6L828.6,342.6" stroke="#a0a0a0" stroke-width="3"/><path d="M818.6,332.6L828,342" stroke="#585858" stroke-width="1"/><path d="M826.8,341.4L829.8,339.2L834.2,344.6L833.2,347.8L829.6,347Z" fill="#a0a0a0"/><circle cx="732.8" cy="378.8" r="4.9" fill="none" stroke="#a0a0a0" stroke-width="1.7"/><path d="M736.4,382.6L743.4,389.6" stroke="#a0a0a0" stroke-width="2"/><path d="M759.6,381.6C758.6,380.2 757.4,380.6 757.6,382C758.4,386 760.4,390 763.6,390H771.4C773,388 773.6,385 773.4,381.4C773.4,379.6 772,378.2 770.8,378.2V376.2C770.6,374.6 768.8,374.6 768.6,376V374.6C768.4,372.8 766.2,372.8 766,374.6V375.4C765.6,373.6 763.6,374 763.6,375.6V377C763,375.8 761.2,376 761.2,377.6V384Z" fill="#a0a0a0"/><path d="M799.4,388.6A7.2,7.2 0 1 1 802.8,381.6" fill="none" stroke="#a0a0a0" stroke-width="2.2"/><path d="M796.4,384.6L803.8,383.6L803.4,390.2Z" fill="#a0a0a0"/><path d="M796,389.6H803.4" stroke="#a0a0a0" stroke-width="1"/><path d="M826.6,373.4h7.4v11h-10.4v-8a3,3 0 0 1 3,-3z" fill="#a0a0a0"/><polygon points="817.2,375.4 819.6,375.4 823.6,377.6 823.6,381.6 819.6,384 817.2,384" fill="#a0a0a0"/><path d="M829.6,388V390M831.6,385.6V390M833.6,387.6V390" stroke="#a0a0a0" stroke-width="1"/><rect x="846.8" y="373.2" width="17.2" height="11" fill="#a0a0a0"/><path d="M848.6,381.6H862.4" stroke="#585858" stroke-width="1" stroke-dasharray="3 1.6"/><path d="M859.4,388V390M861.4,385.6V390M863.4,387.6V390" stroke="#a0a0a0" stroke-width="1"/></svg>
<div class="a" style="left:7.2px;top:448.6px;width:1005px;height:31px;background:linear-gradient(#767676,#6a6a6a 8%,#5e5e5e 50%,#535353)"></div>
<div class="a" style="left:7.2px;top:479.6px;width:1005px;height:2px;background:#2c2c2c"></div>
<svg style="left:0px;top:0px" width="1020" height="484" viewBox="0 0 1020 484" ><rect x="22" y="456" width="19.2" height="11.8" fill="#a6a6a6"/><path d="M35.9,458V466.2M31.8,462.1H40" stroke="#0d7a0d" stroke-width="2"/><rect x="22" y="470" width="19.2" height="1.5" fill="#a6a6a6"/><rect x="22" y="473.6" width="19.2" height="1.5" fill="#a6a6a6"/><polygon points="44.9,471 50.5,471 47.7,474.2" fill="#eee"/><rect x="58" y="453" width="1" height="25" fill="#808080"/><rect x="67" y="455.2" width="10" height="18.6" fill="#6cba5a"/><path d="M72,463V471M68,467H76" stroke="#3c4c3c" stroke-width="1.8"/><rect x="78.4" y="462.4" width="2" height="9" fill="#aaa"/><rect x="81.4" y="462.4" width="2" height="9" fill="#aaa"/><path d="M85.4,461.6V473.4H82" fill="none" stroke="#6cba5a" stroke-width="1.2"/><rect x="104" y="455.2" width="10" height="18.6" fill="#6cba5a"/><path d="M109,463V471M105,467H113" stroke="#3c4c3c" stroke-width="1.8"/><rect x="97.6" y="462.4" width="2" height="9" fill="#aaa"/><rect x="100.6" y="462.4" width="2" height="9" fill="#aaa"/><path d="M95.6,461.6V473.4H99" fill="none" stroke="#6cba5a" stroke-width="1.2"/><path d="M125.6,454.4V460.4M122.6,457.4H128.6" stroke="#2fa8e0" stroke-width="1.2"/><rect x="126.2" y="461.4" width="2.6" height="8.8" fill="none" stroke="#2fa8e0" stroke-width="1.1"/><rect x="130.2" y="461.4" width="2.6" height="8.8" fill="none" stroke="#2fa8e0" stroke-width="1.1"/><rect x="134.2" y="461.4" width="2.6" height="8.8" fill="none" stroke="#2fa8e0" stroke-width="1.1"/><path d="M123.2,465V473.2H127.4M141.4,465V473.2H137.2" fill="none" stroke="#aaa" stroke-width="1.6"/><rect x="138" y="465" width="4" height="8.8" fill="#aaa"/><path d="M167,454.4V460.4M164,457.4H170" stroke="#2fa8e0" stroke-width="1.2"/><rect x="155" y="461.4" width="2.6" height="8.8" fill="none" stroke="#2fa8e0" stroke-width="1.1"/><rect x="159" y="461.4" width="2.6" height="8.8" fill="none" stroke="#2fa8e0" stroke-width="1.1"/><rect x="163" y="461.4" width="2.6" height="8.8" fill="none" stroke="#2fa8e0" stroke-width="1.1"/><path d="M151.6,465V473.2H155.8M169.4,465V473.2H165.4" fill="none" stroke="#aaa" stroke-width="1.6"/><rect x="151" y="465" width="4" height="8.8" fill="#aaa"/><rect x="179" y="455" width="9" height="16" fill="#aaa"/><path d="M183.4,457.4V462.4M181,460H186M181,468.4H187" stroke="#666" stroke-width="1"/><path d="M408,462C416,459.6 423,464 423.2,472" fill="none" stroke="#999" stroke-width="3.4"/><path d="M436.6,472C436.8,466 441,462.2 446.6,462.6" fill="none" stroke="#999" stroke-width="3.4"/><polygon points="445.4,456.6 453,462.8 445.4,469" fill="#999"/><rect x="463" y="451.4" width="1" height="26" fill="#808080"/><rect x="475.4" y="458.4" width="14.4" height="14" fill="#4c4c4c" stroke="#a6a6a6" stroke-width="2.8"/><path d="M476.8,465.4H480M485.2,465.4H488.4M482.6,463.8V467M481.2,465.4H484" stroke="#a6a6a6" stroke-width="1"/><rect x="552" y="453.6" width="1" height="22" fill="#808080"/><path d="M563,465.5H567.6M565.3,463.2V467.8" stroke="#a0a0a0" stroke-width="1"/><polygon points="569,465.5 576.6,458 576.6,473" fill="#a0a0a0"/><rect x="578" y="458" width="2.2" height="15" fill="#a0a0a0"/><polygon points="593.8,465.5 601.6,458 601.6,473" fill="#a0a0a0"/><rect x="604" y="458" width="2.2" height="15" fill="#a0a0a0"/><polygon points="662,456.6 679.2,465.4 662,474.2" fill="#a8a8a8"/><rect x="693.8" y="458" width="2.2" height="15" fill="#a0a0a0"/><polygon points="698.2,458 706,465.5 698.2,473" fill="#a0a0a0"/><rect x="720" y="458" width="2.2" height="15" fill="#a0a0a0"/><polygon points="724.2,458 731.4,465.5 724.2,473" fill="#a0a0a0"/><path d="M732.4,465.5H737M734.7,463.2V467.8" stroke="#a0a0a0" stroke-width="1"/><rect x="747" y="454.5" width="1" height="21" fill="#808080"/><path d="M758.4,461.4V457.8H770.6V461.4" fill="none" stroke="#f08030" stroke-width="1.4"/><polygon points="757.8,457.2 761.6,457.2 757.8,461.2" fill="#f08030"/><polygon points="771.2,457.2 767.4,457.2 771.2,461.2" fill="#f08030"/><rect x="757.8" y="464.6" width="17.4" height="9.4" fill="#a8a8a8"/><path d="M760,470.4H773.4" stroke="#4c4c4c" stroke-width="2" stroke-dasharray="2.2 1.4"/><path d="M757.8,467.6H775.2" stroke="#4c4c4c" stroke-width=".8"/><rect x="889" y="454.5" width="1" height="21" fill="#808080"/><rect x="894.9" y="453" width="26.2" height="25.2" rx="3" fill="#2e2e2e" stroke="#868686" stroke-width="1"/><ellipse cx="908.4" cy="465.6" rx="4.7" ry="6" fill="none" stroke="#d0d0d0" stroke-width="1.7"/><polygon points="900.2,464.8 903.6,460 907,464.8" fill="#d0d0d0"/><polygon points="909.8,466.2 913.2,471 916.6,466.2" fill="#d0d0d0"/><path d="M931.4,464.6C933.4,459.6 939.4,458.6 943.6,462.4" fill="none" stroke="#a8a8a8" stroke-width="2"/><polygon points="945.8,458.2 945.8,465.4 939.4,464.4" fill="#a8a8a8"/><path d="M945.6,473.4C943.6,468.6 937.4,467.4 933,471" fill="none" stroke="#a8a8a8" stroke-width="1.8"/><polygon points="929.8,466.8 929.8,473.4 936,472.8" fill="#a8a8a8"/><rect x="956" y="454.5" width="1" height="21" fill="#808080"/><g fill="none" stroke="#c4c4c4" stroke-width=".9"><path d="M964,458.2L975,465.3L964,472.4" /><path d="M965.8,458.2L976.8,465.3L965.8,472.4" /><path d="M967.6,458.2L978.6,465.3L967.6,472.4" /><path d="M977.6,458.2L988.6,465.3L977.6,472.4" /><path d="M979.4,458.2L990.4,465.3L979.4,472.4" /><path d="M986,458.2L997,465.3L986,472.4" /><path d="M987.8,458.2L998.8,465.3L987.8,472.4" /><path d="M989.6,458.2L1000.6,465.3L989.6,472.4" /></g></svg>
<div class="t" style="left:503.6px;top:459.6px;color:#eee"><span class="d">2</span><span class="d">4</span></div>
<div class="t" style="left:515.6px;top:459.6px;color:#eee">帧速</div>
<div class="t" style="left:631.8px;top:460px;color:#f0f0f0;"><span class="d">1</span></div>
<div class="t" style="left:797.6px;top:460.4px;color:#c4c4c4;"><span class="d">1</span></div>
<div class="t" style="left:825.4px;top:459.6px;color:#ddd">到</div>
<div class="t" style="left:857.6px;top:460.4px;color:#bcbcbc;"><span class="d">5</span><span class="d">0</span></div>
<div class="a" style="left:7.2px;top:481.6px;width:1005px;height:141px;background:#262626"></div>
<div class="a" style="left:37.3px;top:491px;width:965.4px;height:126.9px;background:#575757;border:1px solid #7a7a7a"></div>
<div class="t" style="left:22.6px;top:491.4px;color:#4a4a4a;font-size:9px">×</div>
<svg style="left:400px;top:490px" width="620" height="30" viewBox="0 0 620 30" ><path d="M10,10.3H204.8" stroke="#323232" stroke-width="1"/><path d="M587.4,4.2L598.6,10L587.4,15.8" fill="none" stroke="#2c2c2c" stroke-width="1"/></svg>
<div class="t" style="left:48.8px;top:498.8px;color:#dedede;"><span class="d">0</span><span class="d">0</span><span class="d">:</span><span class="d">0</span><span class="d">0</span><span class="d">:</span><span class="d">0</span><span class="d">0</span></div>
<div class="t" style="left:109.2px;top:499.4px;color:#dedede;"><span class="w" style="width:36px"><span class="m2">Layer </span></span><span class="d">1</span></div>
<svg style="left:0px;top:0px" width="200" height="540" viewBox="0 0 200 540" ><path d="M52.4,530.6V523.6A3.4,3.4 0 0 1 59.2,523.6V530.6Z" fill="#a4a4a4"/><path d="M55.8,522.4V526.4" stroke="#666" stroke-width="1"/><rect x="68.2" y="520" width="7.6" height="7.4" fill="#9a9a9a"/><rect x="71.6" y="523" width="7.8" height="7.6" fill="#7c7c7c"/><g transform="translate(133.8,521.6)"><path d="M0,4.6C2,0.2 8,0.2 10,4.6L8.8,4.8C7,2.4 3,2.4 1.2,4.8Z" fill="#b0b0b0"/><circle cx="5" cy="3.4" r="2" fill="#b0b0b0"/></g><rect x="155" y="524" width="7.4" height="5.6" fill="#b0b0b0"/><path d="M156.6,524V522.4A2.1,2.1 0 0 1 160.8,522.4V524" fill="none" stroke="#b0b0b0" stroke-width="1.2"/><rect x="158.2" y="525.6" width="1" height="2.4" fill="#555"/><g transform="translate(173.7,519.4)" fill="none" stroke="#c0c0c0" stroke-width="1.3"><path d="M2.3,6.4C1,5.5 .6,4.7 .6,3.8A3.3,3.3 0 0 1 7.2,3.8C7.2,4.7 6.8,5.5 5.5,6.4"/><path d="M2.3,7H5.5M2.5,8.5H5.3M3.2,9.8H4.6" stroke-width="1.4"/><path d="M3.9,6V3.6M2.9,4.4L3.9,3.2L4.9,4.4" stroke-width=".9"/></g></svg>
<div class="a" style="left:38.6px;top:538.4px;width:151px;height:1.4px;background:#3a3a3a"></div>
<div class="a" style="left:38.6px;top:539.9px;width:151px;height:1.2px;background:#7a7a7a"></div>
<div class="a" style="left:38.6px;top:541px;width:151px;height:63.6px;background:#4f4f4f"></div>
<div class="a" style="left:47.2px;top:563.2px;width:142px;height:20.4px;background:#757575"></div>
<svg style="left:0px;top:0px" width="200" height="620" viewBox="0 0 200 620" ><polygon points="42,551.2 49.4,551.2 45.7,555.4" fill="#f0f0f0"/><rect x="67.1" y="546.8" width="13.2" height="13" fill="#262626"/><rect x="67.1" y="567.2" width="13.2" height="13" fill="#262626"/><rect x="67.1" y="587.2" width="13.2" height="13" fill="#262626"/><rect x="48.9" y="567.2" width="13.2" height="13" fill="#d87200"/><rect x="48.9" y="587.2" width="13.2" height="13" fill="#d87200"/><g transform="translate(134.8,549)"><path d="M0,4.6C2,0.2 8,0.2 10,4.6L8.8,4.8C7,2.4 3,2.4 1.2,4.8Z" fill="#b4b4b4"/><circle cx="5" cy="3.4" r="2" fill="#b4b4b4"/></g><rect x="158.8" y="551.4" width="1.2" height="1.2" fill="#ccc"/><g transform="translate(174.4,546.4)" fill="none" stroke="#d0d0d0" stroke-width="1.3"><path d="M2.3,6.4C1,5.5 .6,4.7 .6,3.8A3.3,3.3 0 0 1 7.2,3.8C7.2,4.7 6.8,5.5 5.5,6.4"/><path d="M2.3,7H5.5M2.5,8.5H5.3M3.2,9.8H4.6" stroke-width="1.4"/><path d="M3.9,6V3.6M2.9,4.4L3.9,3.2L4.9,4.4" stroke-width=".9"/></g><g transform="translate(134.8,569)"><path d="M0,4.6C2,0.2 8,0.2 10,4.6L8.8,4.8C7,2.4 3,2.4 1.2,4.8Z" fill="#a0a0a0"/><circle cx="5" cy="3.4" r="2" fill="#a0a0a0"/></g><rect x="158.8" y="571.4" width="1.2" height="1.2" fill="#ccc"/><g transform="translate(174.4,566.4)" fill="none" stroke="#a8a8a8" stroke-width="1.3"><path d="M2.3,6.4C1,5.5 .6,4.7 .6,3.8A3.3,3.3 0 0 1 7.2,3.8C7.2,4.7 6.8,5.5 5.5,6.4"/><path d="M2.3,7H5.5M2.5,8.5H5.3M3.2,9.8H4.6" stroke-width="1.4"/><path d="M3.9,6V3.6M2.9,4.4L3.9,3.2L4.9,4.4" stroke-width=".9"/></g><g transform="translate(134.8,589)"><path d="M0,4.6C2,0.2 8,0.2 10,4.6L8.8,4.8C7,2.4 3,2.4 1.2,4.8Z" fill="#b4b4b4"/><circle cx="5" cy="3.4" r="2" fill="#b4b4b4"/></g><rect x="158.8" y="591.4" width="1.2" height="1.2" fill="#ccc"/><g transform="translate(174.4,586.4)" fill="none" stroke="#d0d0d0" stroke-width="1.3"><path d="M2.3,6.4C1,5.5 .6,4.7 .6,3.8A3.3,3.3 0 0 1 7.2,3.8C7.2,4.7 6.8,5.5 5.5,6.4"/><path d="M2.3,7H5.5M2.5,8.5H5.3M3.2,9.8H4.6" stroke-width="1.4"/><path d="M3.9,6V3.6M2.9,4.4L3.9,3.2L4.9,4.4" stroke-width=".9"/></g></svg>
<div class="t" style="left:88.6px;top:548px;color:#e0e0e0;"><span class="w" style="width:24px"><span class="m2">Cel </span></span><span class="d">1</span></div>
<div class="t" style="left:88.6px;top:569.2px;color:#e8e8e8;"><span class="w" style="width:30px"><span class="m2">Layer</span></span></div>
<div class="t" style="left:88.6px;top:589.4px;color:#e0e0e0;"><span class="w" style="width:36px"><span class="m2">Raster</span></span></div>
<div class="a" style="left:20.2px;top:578.3px;width:18px;height:36.2px;background:#5e5e5e;border:1px solid #8c8c8c;border-right:none"></div>
<div class="t" style="left:33.4px;top:583px;font-size:12.5px;line-height:12px;color:#f4f4f4;transform-origin:0 0;transform:rotate(90deg) scaleY(.66)">图层</div>
<div class="a" style="left:410px;top:511px;width:592.6px;height:1px;background:#a96344"></div>
<svg style="left:0;top:0" width="1002" height="620" viewBox="0 0 1002 620"><path d="M413.8,514.2L415.2,515.6L413.8,517L412.4,515.6Z" fill="none" stroke="#7c7c7c" stroke-width=".8"/><path d="M444.78,514.2L446.18,515.6L444.78,517L443.38,515.6Z" fill="none" stroke="#7c7c7c" stroke-width=".8"/><path d="M475.76,514.2L477.16,515.6L475.76,517L474.36,515.6Z" fill="none" stroke="#7c7c7c" stroke-width=".8"/><path d="M506.74,514.2L508.14,515.6L506.74,517L505.34,515.6Z" fill="none" stroke="#7c7c7c" stroke-width=".8"/><path d="M537.72,514.2L539.12,515.6L537.72,517L536.32,515.6Z" fill="none" stroke="#7c7c7c" stroke-width=".8"/><path d="M568.7,514.2L570.1,515.6L568.7,517L567.3,515.6Z" fill="none" stroke="#7c7c7c" stroke-width=".8"/><path d="M599.68,514.2L601.08,515.6L599.68,517L598.28,515.6Z" fill="none" stroke="#7c7c7c" stroke-width=".8"/><path d="M630.66,514.2L632.06,515.6L630.66,517L629.26,515.6Z" fill="none" stroke="#7c7c7c" stroke-width=".8"/><path d="M661.64,514.2L663.04,515.6L661.64,517L660.24,515.6Z" fill="none" stroke="#7c7c7c" stroke-width=".8"/><path d="M692.62,514.2L694.02,515.6L692.62,517L691.22,515.6Z" fill="none" stroke="#7c7c7c" stroke-width=".8"/><path d="M723.6,514.2L725,515.6L723.6,517L722.2,515.6Z" fill="none" stroke="#7c7c7c" stroke-width=".8"/><path d="M754.58,514.2L755.98,515.6L754.58,517L753.18,515.6Z" fill="none" stroke="#7c7c7c" stroke-width=".8"/><path d="M785.56,514.2L786.96,515.6L785.56,517L784.16,515.6Z" fill="none" stroke="#7c7c7c" stroke-width=".8"/><path d="M816.54,514.2L817.94,515.6L816.54,517L815.14,515.6Z" fill="none" stroke="#7c7c7c" stroke-width=".8"/><path d="M847.52,514.2L848.92,515.6L847.52,517L846.12,515.6Z" fill="none" stroke="#7c7c7c" stroke-width=".8"/><path d="M878.5,514.2L879.9,515.6L878.5,517L877.1,515.6Z" fill="none" stroke="#7c7c7c" stroke-width=".8"/><path d="M909.48,514.2L910.88,515.6L909.48,517L908.08,515.6Z" fill="none" stroke="#7c7c7c" stroke-width=".8"/><path d="M940.46,514.2L941.86,515.6L940.46,517L939.06,515.6Z" fill="none" stroke="#7c7c7c" stroke-width=".8"/><path d="M971.44,514.2L972.84,515.6L971.44,517L970.04,515.6Z" fill="none" stroke="#7c7c7c" stroke-width=".8"/><path d="M1002.42,514.2L1003.82,515.6L1002.42,517L1001.02,515.6Z" fill="none" stroke="#7c7c7c" stroke-width=".8"/></svg>
<div class="a" style="left:0;top:0;width:1002.2px;height:620px;overflow:hidden"><div class="t" style="left:410.8px;top:525.2px;color:#e4e4e4"><span class="d">7</span></div><div class="t" style="left:441.78px;top:525.2px;color:#e4e4e4"><span class="d">8</span></div><div class="t" style="left:472.76px;top:525.2px;color:#e4e4e4"><span class="d">9</span></div><div class="t" style="left:500.74px;top:525.2px;color:#e4e4e4"><span class="d">1</span><span class="d">0</span></div><div class="t" style="left:531.72px;top:525.2px;color:#e4e4e4"><span class="d">1</span><span class="d">1</span></div><div class="t" style="left:562.7px;top:525.2px;color:#e4e4e4"><span class="d">1</span><span class="d">2</span></div><div class="t" style="left:593.68px;top:525.2px;color:#e4e4e4"><span class="d">1</span><span class="d">3</span></div><div class="t" style="left:624.66px;top:525.2px;color:#e4e4e4"><span class="d">1</span><span class="d">4</span></div><div class="t" style="left:655.64px;top:525.2px;color:#e4e4e4"><span class="d">1</span><span class="d">5</span></div><div class="t" style="left:686.62px;top:525.2px;color:#e4e4e4"><span class="d">1</span><span class="d">6</span></div><div class="t" style="left:717.6px;top:525.2px;color:#e4e4e4"><span class="d">1</span><span class="d">7</span></div><div class="t" style="left:748.58px;top:525.2px;color:#e4e4e4"><span class="d">1</span><span class="d">8</span></div><div class="t" style="left:779.56px;top:525.2px;color:#e4e4e4"><span class="d">1</span><span class="d">9</span></div><div class="t" style="left:810.54px;top:525.2px;color:#e4e4e4"><span class="d">2</span><span class="d">0</span></div><div class="t" style="left:841.52px;top:525.2px;color:#e4e4e4"><span class="d">2</span><span class="d">1</span></div><div class="t" style="left:872.5px;top:525.2px;color:#e4e4e4"><span class="d">2</span><span class="d">2</span></div><div class="t" style="left:903.48px;top:525.2px;color:#e4e4e4"><span class="d">2</span><span class="d">3</span></div><div class="t" style="left:934.46px;top:525.2px;color:#e4e4e4"><span class="d">2</span><span class="d">4</span></div><div class="t" style="left:965.44px;top:525.2px;color:#e4e4e4"><span class="d">2</span><span class="d">5</span></div><div class="t" style="left:996.42px;top:525.2px;color:#e4e4e4"><span class="d">2</span><span class="d">6</span></div></div>
<div class="a" style="left:7.2px;top:622.2px;width:1003px;height:15.8px;background:#555"></div>
<div class="a" style="left:7.2px;top:638px;width:1005px;height:1.2px;background:#2a2a2a"></div>
<svg style="left:8px;top:622px" width="1004" height="17" viewBox="0 0 1004 17" ><g fill="none" stroke="#2e2e2e" stroke-width="1"><path d="M13.4,2.2L2.4,7.6L13.4,13"/><path d="M16,7.6H950"/><path d="M954,2.2L965,7.6L954,13"/></g><polygon points="976.6,3.4 991.2,3.4 983.9,14.6" fill="#3a3a3a"/></svg>
<div class="a" style="left:7.2px;top:639.2px;width:1005px;height:21.3px;background:#4c4c4c"></div>
<div class="a" style="left:1010.8px;top:482px;width:1.5px;height:178px;background:#3a3a3a"></div>
<svg style="left:996px;top:645px" width="16" height="16" viewBox="0 0 16 16" ><g stroke="#e8e8e8" stroke-width="1"><path d="M2.6,15.4L15.4,2.6M5.4,15.4L15.4,5.4M8.2,15.4L15.4,8.2M11,15.4L15.4,11M13.8,15.4L15.4,13.8"/></g></svg>
<div class="a" style="left:189px;top:61px;width:221.4px;height:607px;background:#4b4b4b;border:1px solid #2a2a2a;border-bottom:none"></div>
<div class="a" style="left:189px;top:31.3px;width:22.5px;height:30.6px;background:#262626"></div>
<div class="mi" style="left:193.5px">帧</div>
<div class="pi" style="top:70.4px">在左边增加关键帧</div>
<div class="pi" style="top:95.4px">在右边增加关键帧</div>
<div class="pi" style="top:120.4px">在左边增加中间帧</div>
<div class="pi" style="top:145.4px">在右边增加中间帧</div>
<div class="pi" style="top:170.4px">向左复制帧</div>
<div class="pi" style="top:195.4px">向右复制帧</div>
<div class="pi" style="top:219.4px">复制帧...</div>
<div class="pi" style="top:243.4px">定格帧</div>
<div class="psep" style="top:266px"></div>
<div class="pi" style="top:276.4px">生成中间帧</div>
<div class="pi dis" style="top:299.4px">为所选线条生成中间帧</div>
<div class="pi" style="top:323.4px">添加中间帧...</div>
<div class="pi" style="top:347.4px">禁止改变中间帧</div>
<div class="pi" style="top:370.4px">保持线条连接信息（中间帧）</div>
<div class="psep" style="top:392px"></div>
<div class="pi" style="top:402.4px">传递分组信息</div>
<div class="pi" style="top:425.4px">覆盖分组信息</div>
<div class="pi" style="top:448.4px">传递边界线信息</div>
<div class="pi" style="top:471.4px">更新所选线条遮挡信息</div>
<div class="psep" style="top:493px"></div>
<div class="pi" style="top:503.4px">转换为关键帧</div>
<div class="pi" style="top:526.4px">转换为空白关键帧</div>
<div class="pi" style="top:549.4px">转换为中间帧</div>
<div class="pi" style="top:572.4px">转换为空白中间帧</div>
<div class="pi" style="top:595.4px">转换为定格帧</div>
<div class="psep" style="top:617px"></div>
<div class="pi" style="top:628.4px">清空单页</div>
<div class="pi" style="top:654.4px">清空帧</div>
</body>
</html>
